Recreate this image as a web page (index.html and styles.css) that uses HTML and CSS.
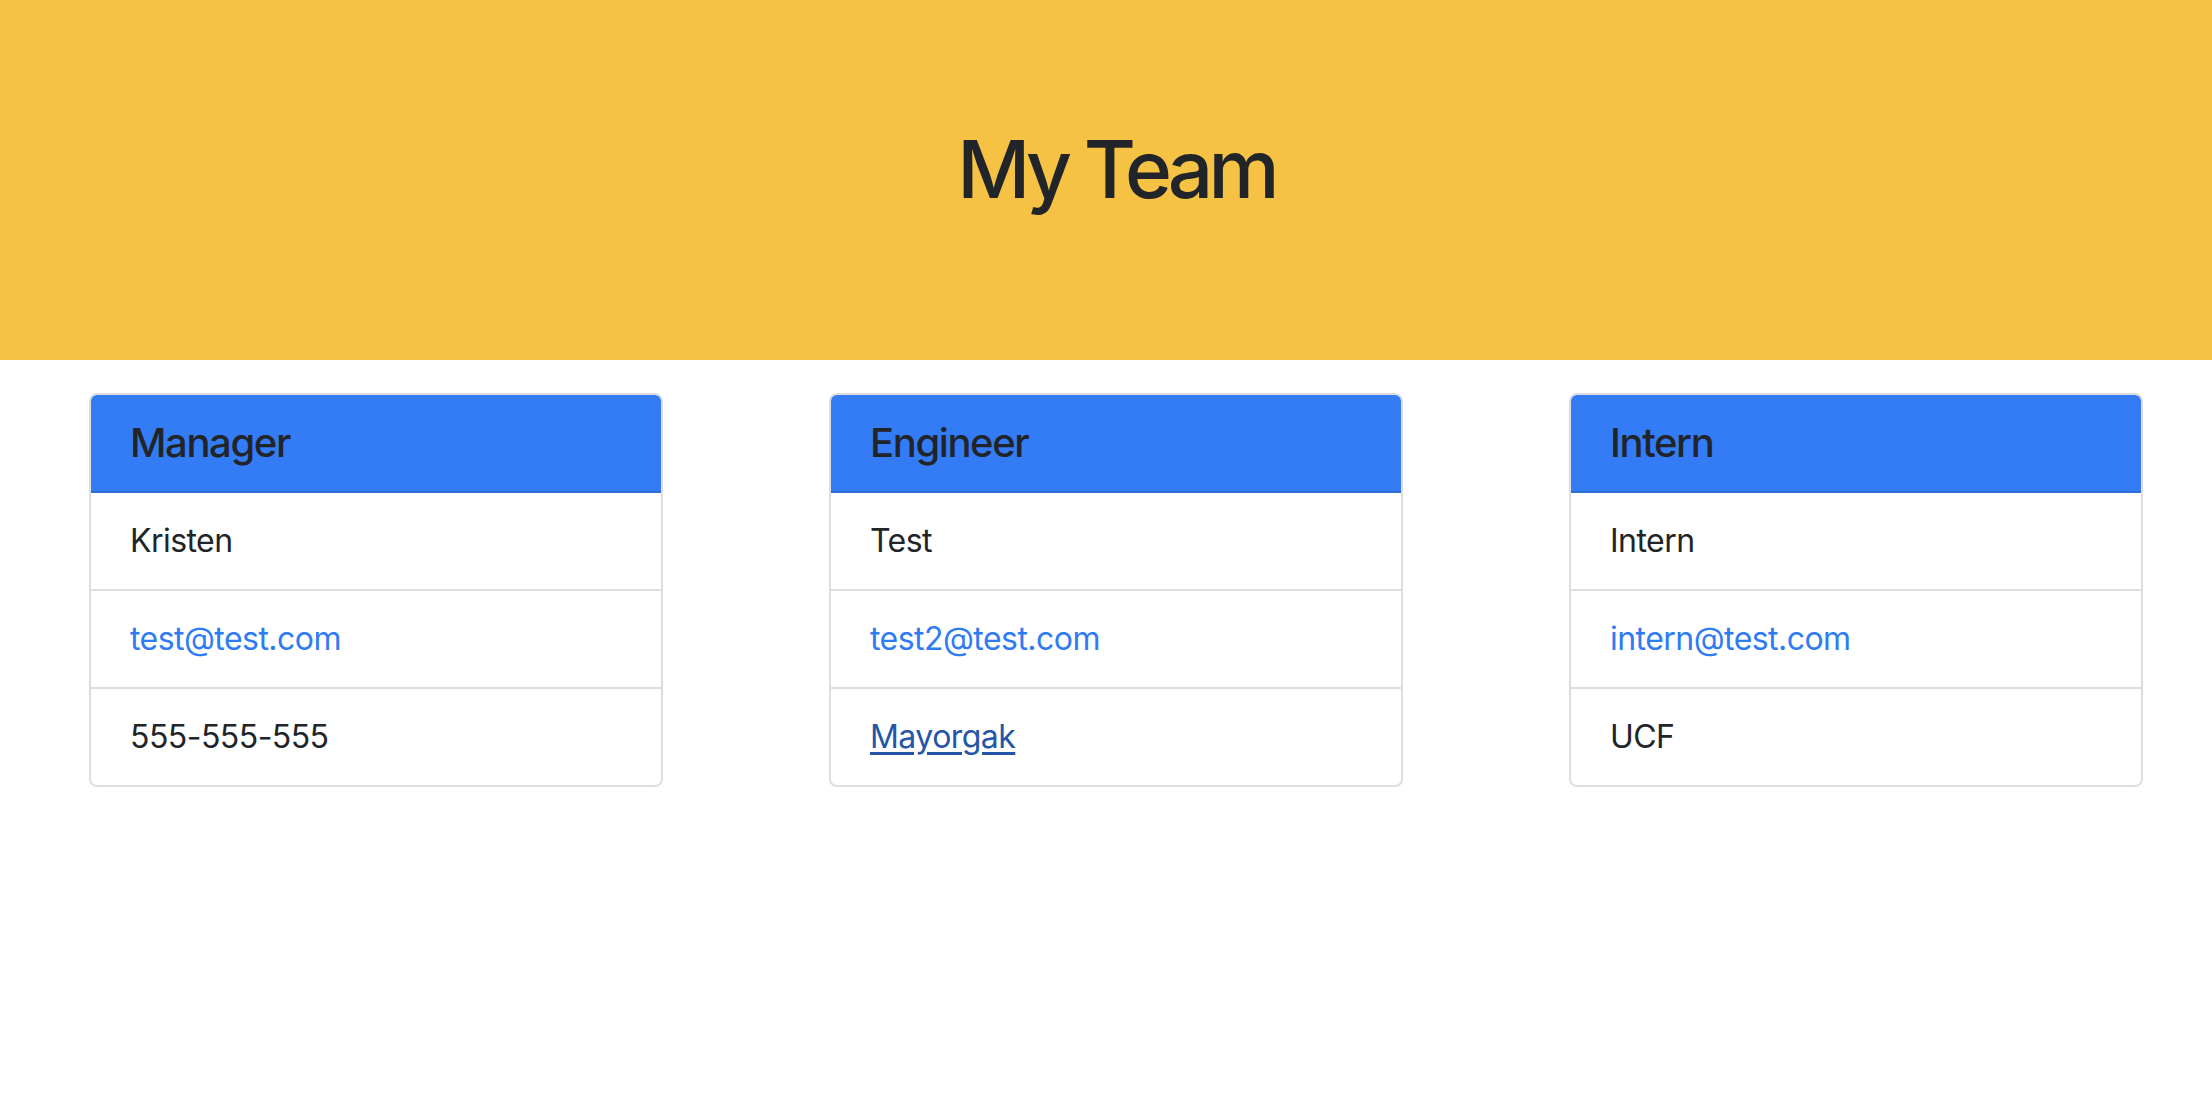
FILE: index.html
```html
<!DOCTYPE html>
<html lang="en">
<head>
<meta charset="utf-8">
<title>My Team</title>
<link rel="stylesheet" href="styles.css">
</head>
<body>
<header class="jumbo">
  <h1 class="title">My Team</h1>
</header>
<main class="cards">
  <section class="card">
    <h5 class="card-header">Manager</h5>
    <ul class="list">
      <li class="item">Kristen</li>
      <li class="item"><a class="mail" href="#">test@test.com</a></li>
      <li class="item">555-555-555</li>
    </ul>
  </section>
  <section class="card">
    <h5 class="card-header">Engineer</h5>
    <ul class="list">
      <li class="item">Test</li>
      <li class="item"><a class="mail" href="#">test2@test.com</a></li>
      <li class="item"><a class="gh" href="#">Mayorgak</a></li>
    </ul>
  </section>
  <section class="card">
    <h5 class="card-header">Intern</h5>
    <ul class="list">
      <li class="item">Intern</li>
      <li class="item"><a class="mail" href="#">intern@test.com</a></li>
      <li class="item">UCF</li>
    </ul>
  </section>
</main>
</body>
</html>
```
FILE: styles.css
```css
* { box-sizing: border-box; }
html, body {
  margin: 0;
  padding: 0;
  background: #ffffff;
  font-family: Inter, "Noto Sans", "Liberation Sans", sans-serif;
  color: #212529;
}
.jumbo {
  height: 360px;
  background: #f6c244;
  padding: 121px 0 0 20px;
}
.title {
  margin: 0;
  text-align: center;
  font-size: 80px;
  line-height: 96px;
  font-weight: 500;
  letter-spacing: -0.06em;
  color: #212529;
}
.cards {
  display: flex;
  gap: 166px;
  padding: 33px 0 0 89px;
}
.card {
  width: 574px;
  border: 2px solid #dedede;
  border-radius: 8px;
  overflow: hidden;
}
.card-header {
  margin: 0;
  background: #347cf5;
  border-bottom: 2px solid #2d6cd4;
  padding: 24px 40px 24px 39px;
  font-size: 40px;
  line-height: 48px;
  font-weight: 500;
  letter-spacing: -0.035em;
  color: #212529;
}
.list {
  list-style: none;
  margin: 0;
  padding: 0;
}
.item {
  padding: 24px 40px 24px 39px;
  font-size: 32px;
  line-height: 48px;
  letter-spacing: -0.017em;
  border-bottom: 2px solid #dedede;
}
.item:last-child { border-bottom: 0; }
.mail {
  color: #2f7bf2;
  text-decoration: none;
}
.gh {
  color: #2555a8;
  text-decoration: underline;
  text-underline-offset: 4px;
}
```
